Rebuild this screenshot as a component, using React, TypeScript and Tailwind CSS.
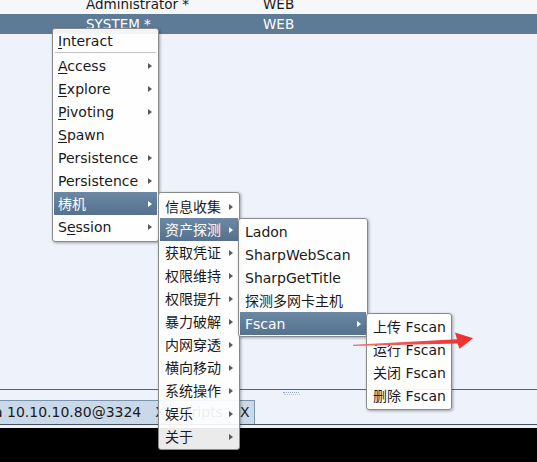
import React from "react";

const FONT = { fontFamily: '"DejaVu Sans", "Noto Sans CJK SC", sans-serif' };

function Tri({ white }: { white?: boolean }) {
  return (
    <svg width="4" height="6" viewBox="0 0 4 6" className="shrink-0">
      <polygon points="0,0 4,3 0,6" fill={white ? "#ffffff" : "#5a5a5a"} />
    </svg>
  );
}

function Row({
  children,
  arrow,
  hl,
  main,
}: {
  children: React.ReactNode;
  arrow?: boolean;
  hl?: boolean;
  main?: boolean;
}) {
  return (
    <div
      className={
        "h-[23px] mx-[1px] pr-[5px] flex items-center justify-between whitespace-nowrap " +
        (main ? "pl-[4px] " : "pl-[5px] ") +
        (hl
          ? "bg-linear-to-b from-[#6b88a5] to-[#55718e] text-white"
          : "text-[#1a1a1a]")
      }
    >
      <span className="leading-none">{children}</span>
      {arrow && <Tri white={hl} />}
    </div>
  );
}

const menuBox =
  "absolute border border-[#8a8a8a] rounded-[3px] bg-white/[0.92] shadow-[1px_1px_3px_rgba(0,0,0,0.35)] text-[14px]";

const U = ({ c }: { c: string }) => (
  <span className="underline underline-offset-[2px] decoration-[1px]">{c}</span>
);

export default function App() {
  return (
    <div
      className="relative w-[537px] h-[462px] overflow-hidden bg-[#eef2fa] flex flex-col"
      style={FONT}
    >
      {/* table rows */}
      <div className="h-[14px] overflow-hidden bg-[#f6f7f9] shrink-0">
        <div className="flex h-[20px] mt-[-6px] items-center text-[13.5px] text-[#1a1a1a] pl-[86px]">
          <span className="w-[177px]">Administrator *</span>
          <span>WEB</span>
        </div>
      </div>
      <div className="flex h-[20px] shrink-0 items-center bg-[#5d7a97] text-[13.5px] text-white pl-[86px]">
        <span className="w-[177px]">SYSTEM *</span>
        <span>WEB</span>
      </div>
      <div className="flex-1 bg-[#eef2fa]" />
      <div className="h-px bg-[#59636e] shrink-0" />
      {/* splitter */}
      <div className="h-[10px] shrink-0 flex justify-center pl-[46px] pt-[2px]">
        <div className="flex flex-col gap-[1px]">
          <div className="w-[16px] h-0 border-t border-dotted border-[#8fa6c4]" />
          <div className="w-[16px] h-0 border-t border-dotted border-[#b5c4d8] ml-[1px]" />
        </div>
      </div>
      {/* tab bar */}
      <div className="h-[25px] shrink-0 flex border-b border-[#46525e] text-[14px] text-[#1a1a1a]">
        <div className="w-[171px] h-full bg-[#cad9ea] border-t border-r border-[#7b92ab] flex items-center overflow-hidden">
          <span className="ml-[-6px] whitespace-nowrap">a 10.10.10.80@3324</span>
          <span className="ml-[14px]">X</span>
        </div>
        <div className="w-[84px] h-full bg-[#cad9ea] border-t border-r border-[#7b92ab] flex items-center">
          <span className="ml-[4px]">Scripts</span>
          <span className="ml-[17px]">X</span>
        </div>
      </div>
      <div className="h-[3px] shrink-0 bg-[#eef2f6]" />
      <div className="h-[34px] shrink-0 bg-black" />

      {/* main context menu */}
      <div className={menuBox + " left-[52px] top-[28px] w-[107px] h-[214px] pt-[1px]"}>
        <div className="h-[21px] mx-[1px] pl-[4px] flex items-center text-[#1a1a1a]">
          <span className="leading-none">
            <U c="I" />nteract
          </span>
        </div>
        <div className="h-[3px] flex items-center mx-[2px]">
          <div className="h-px w-full bg-[#c4c4c4]" />
        </div>
        <Row main arrow>
          <U c="A" />ccess
        </Row>
        <Row main arrow>
          <U c="E" />xplore
        </Row>
        <Row main arrow>
          <U c="P" />ivoting
        </Row>
        <Row main>
          <U c="S" />pawn
        </Row>
        <Row main arrow>
          Persistence
        </Row>
        <Row main arrow>
          Persistence
        </Row>
        <Row main arrow hl>
          梼机
        </Row>
        <Row main arrow>
          S<U c="e" />ssion
        </Row>
      </div>

      {/* submenu 1 */}
      <div className={menuBox + " left-[158px] top-[192px] w-[82px] h-[258px] pt-[2px]"}>
        {[
          "信息收集",
          "资产探测",
          "获取凭证",
          "权限维持",
          "权限提升",
          "暴力破解",
          "内网穿透",
          "横向移动",
          "系统操作",
          "娱乐",
          "关于",
        ].map((t) => (
          <Row key={t} arrow hl={t === "资产探测"}>
            {t}
          </Row>
        ))}
      </div>

      {/* submenu 2 */}
      <div className={menuBox + " left-[238px] top-[218px] w-[130px] h-[119px] pt-[1px]"}>
        <Row>Ladon</Row>
        <Row>SharpWebScan</Row>
        <Row>SharpGetTitle</Row>
        <Row>探测多网卡主机</Row>
        <Row arrow hl>
          Fscan
        </Row>
      </div>

      {/* submenu 3 */}
      <div className={menuBox + " left-[366px] top-[313px] w-[86px] h-[97px] pt-[1px]"}>
        <Row>上传 Fscan</Row>
        <Row>运行 Fscan</Row>
        <Row>关闭 Fscan</Row>
        <Row>删除 Fscan</Row>
      </div>

      {/* red annotation arrow */}
      <svg
        className="absolute left-0 top-0 pointer-events-none"
        width="537"
        height="462"
        viewBox="0 0 537 462"
      >
        <defs>
          <linearGradient id="ag" gradientUnits="userSpaceOnUse" x1="353" y1="0" x2="473" y2="0">
            <stop offset="0" stopColor="#f67070" />
            <stop offset="1" stopColor="#ef2c2c" />
          </linearGradient>
        </defs>
        <polygon
          points="353,344.8 457,339.2 455,332.5 473,338.3 459.5,348.8 457.6,343.6 353,346"
          fill="url(#ag)"
        />
      </svg>
    </div>
  );
}
